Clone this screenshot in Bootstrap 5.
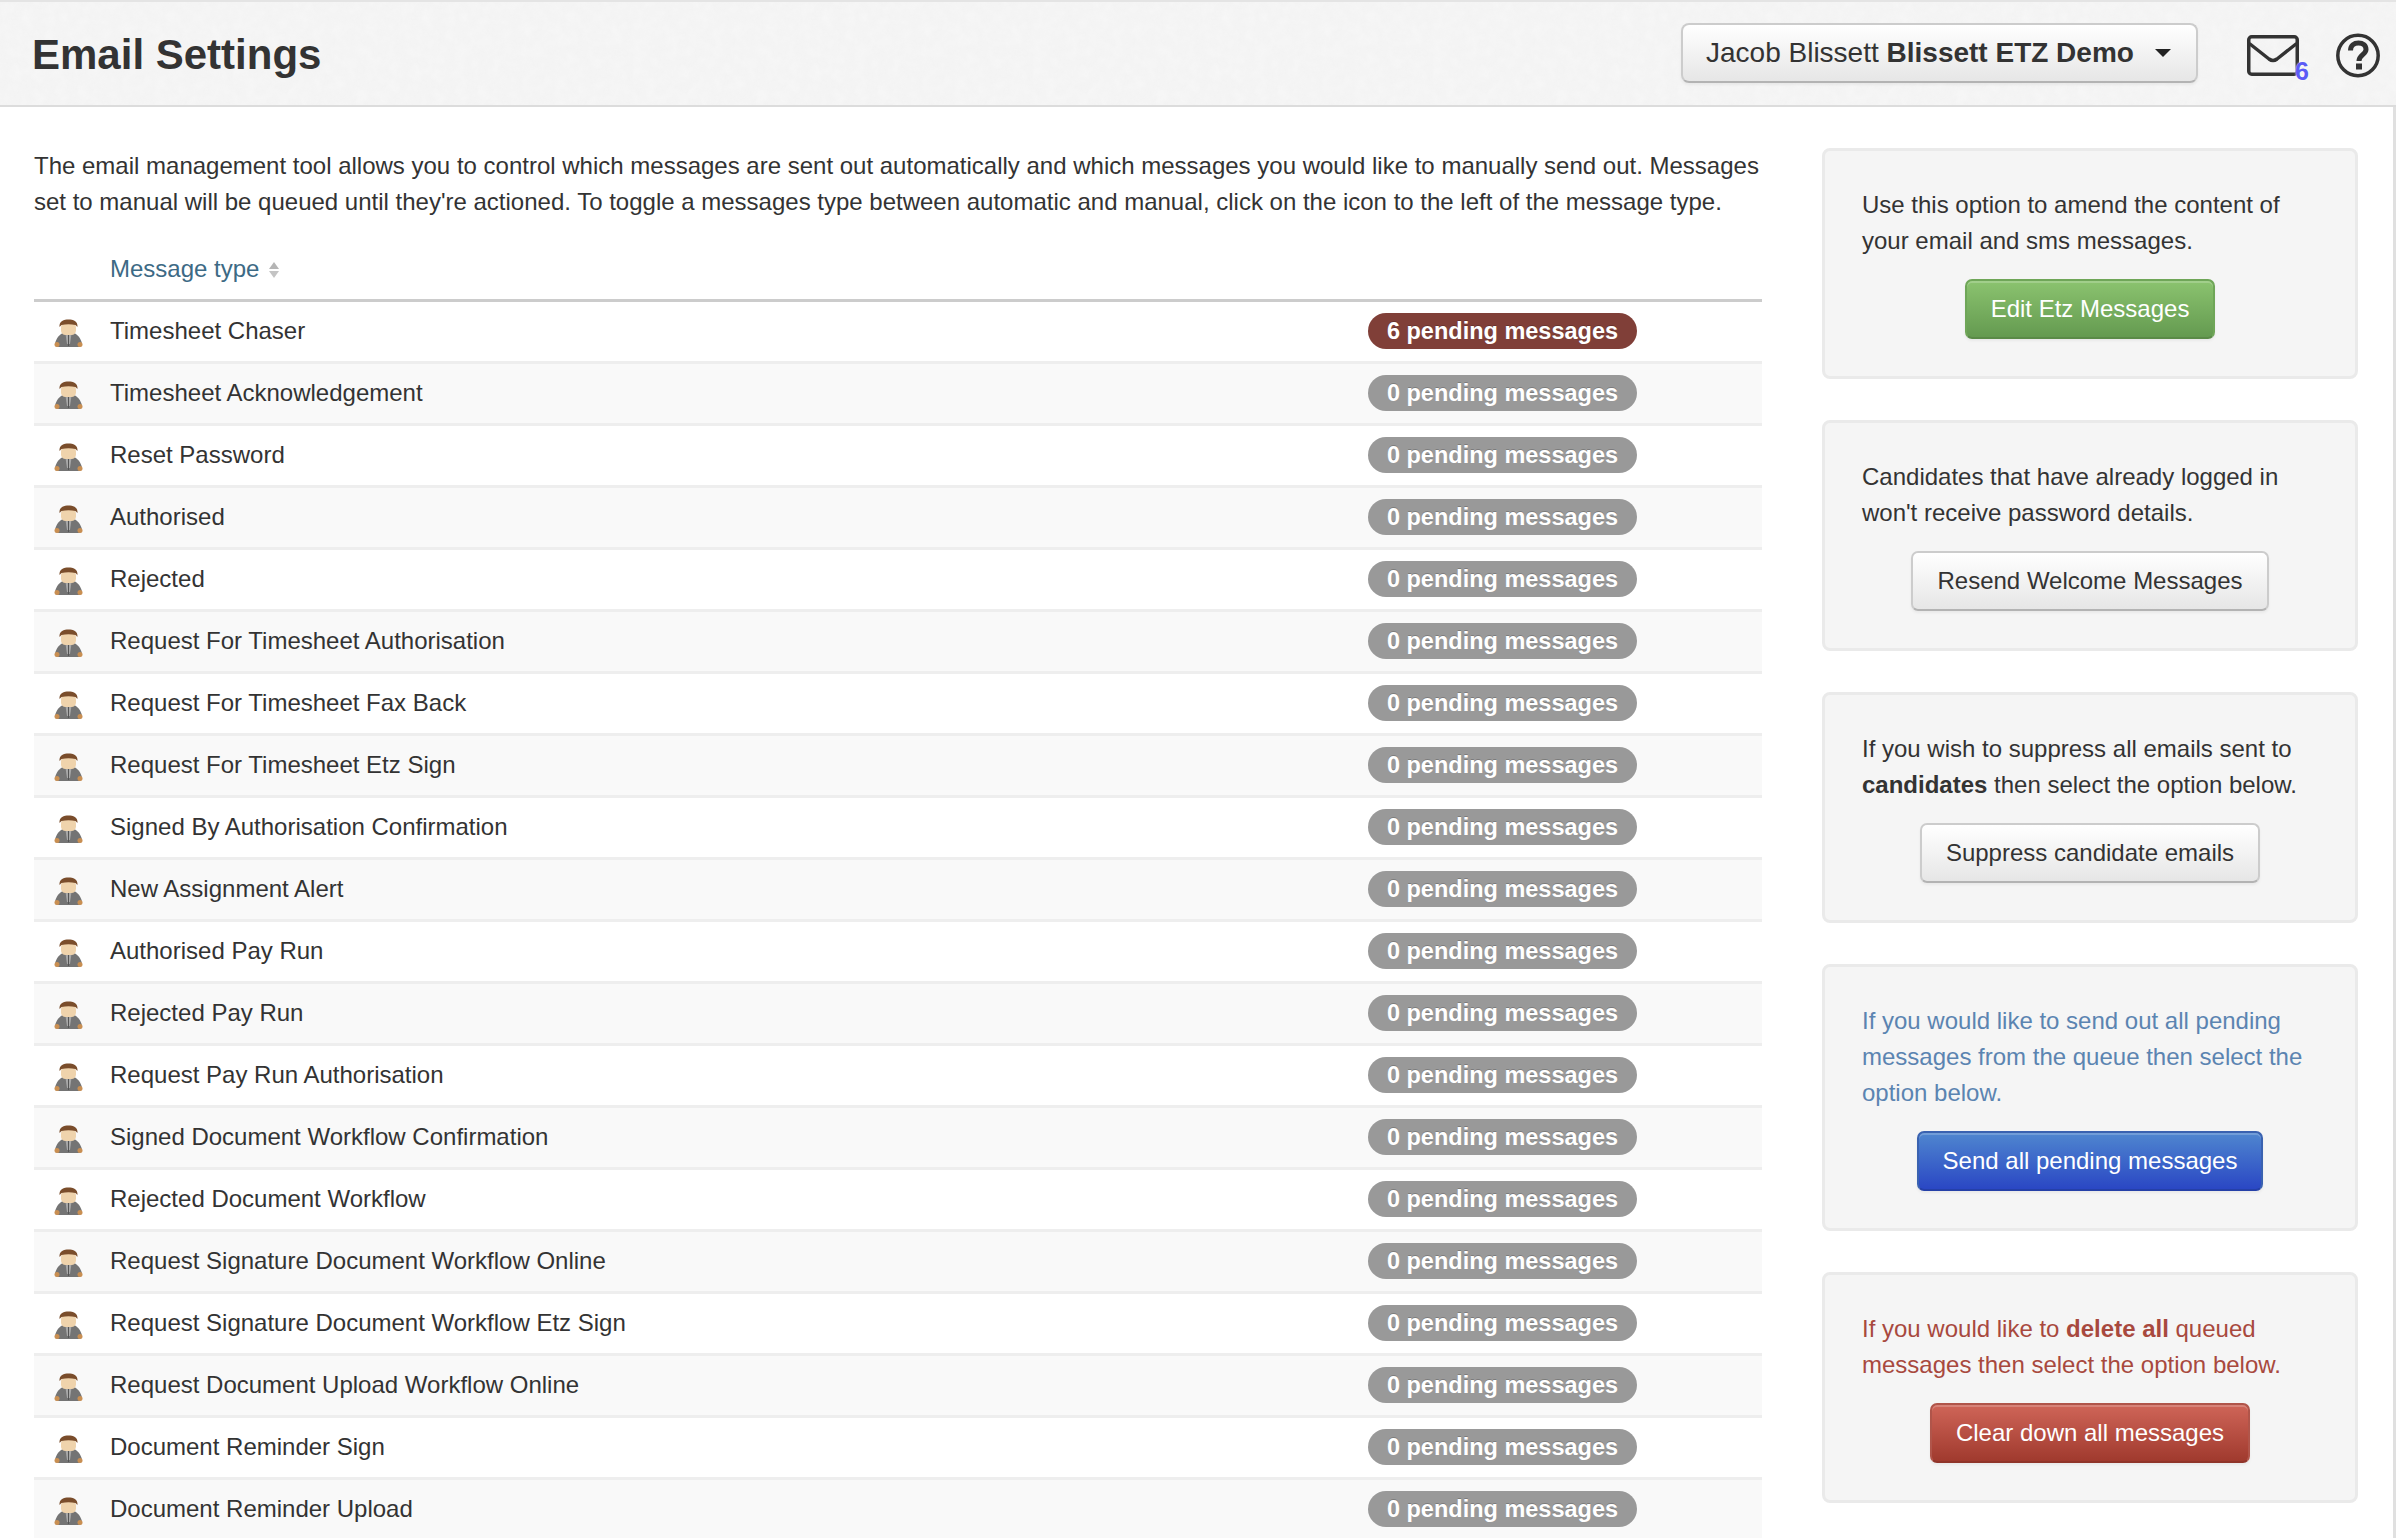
<!DOCTYPE html>
<html lang="en">
<head>
<meta charset="utf-8">
<title>Email Settings</title>
<link rel="stylesheet" href="https://cdn.jsdelivr.net/npm/bootstrap@5.3.0/dist/css/bootstrap.min.css">
<style>
html,body{height:100%;overflow:hidden}
body{font-family:"Liberation Sans",Arial,sans-serif;font-size:24px;line-height:36px;color:#333;background:#fff}
.top-strip{height:107px;background-color:#f7f7f7;background-image:url("data:image/svg+xml,%3Csvg xmlns='http://www.w3.org/2000/svg' width='400' height='200'%3E%3Cfilter id='n'%3E%3CfeTurbulence type='fractalNoise' baseFrequency='.09' numOctaves='3'/%3E%3CfeColorMatrix values='0 0 0 0 .55 0 0 0 0 .55 0 0 0 0 .55 0 0 0 .09 0'/%3E%3C/filter%3E%3Crect width='400' height='200' filter='url(%23n)'/%3E%3C/svg%3E");border-top:2px solid #e4e4e4;border-bottom:2px solid #dcdcdc;padding:0 16px 0 32px}
.page-name{font-size:42px;font-weight:700;line-height:50px;margin:2px auto 0 0;color:#333}
.acct-btn{height:60px;width:517px;font-size:28px;line-height:34px;color:#333;background:linear-gradient(#fff,#e6e6e6);border:2px solid #ccc;border-bottom-color:#b3b3b3;border-radius:8px;padding:0 25px 0 23px;margin:0 49px 2px 0;box-shadow:inset 0 2px 0 rgba(255,255,255,.2),0 2px 3px rgba(0,0,0,.05)}
.acct-caret{width:0;height:0;border-top:8px solid #222;border-left:8px solid transparent;border-right:8px solid transparent}
.mail-wrap{width:52px;height:41px;margin:4px 37px 0 0}
.mail-wrap svg{display:block}
.help-mark{display:block;margin-top:4px}
.mail-count{position:absolute;right:-10px;bottom:-8px;color:#5b5bf5;font-size:25px;line-height:25px;font-weight:700;text-shadow:0 0 2px #fff}
.main-area{padding:41px 34px 0 34px;gap:60px;height:calc(100% - 107px);border-right:3px solid #e0e0e0}
.left-col{width:1728px;flex:none}
.intro{margin:0 0 20px}
.msg-table{margin:0;--bs-table-bg:transparent;color:#333;table-layout:fixed;width:100%}
.msg-table th,.msg-table td{padding:0;border:0;vertical-align:middle;background:transparent;box-shadow:none;color:inherit}
.msg-table thead th{height:60px;font-weight:400;color:#3d6a85;border-bottom:3px solid #ccc}
.msg-table tbody td{height:62px;border-bottom:3px solid #eee}
.msg-table tbody tr:nth-child(even) td{background:#f9f9f9}
.c-icon{width:76px}
.c-pend{width:394px}
.sort-mark{display:inline-block;width:10px;height:16px;vertical-align:-1px;margin-left:10px}
.pill{display:inline-block;width:269px;height:36px;line-height:36px;border-radius:18px;background:#999;color:#fff;font-size:23.5px;font-weight:700;text-align:center;text-shadow:0 -1px 0 rgba(0,0,0,.2)}
.pill-hot{background:#803f38}
.man{display:block;margin:4px 0 0 20px;width:29px;height:29px;filter:blur(.4px)}
.right-col{width:536px;flex:none;display:flex;flex-direction:column;gap:41px}
.side-box{background:#f5f5f5;border:3px solid #eaeaea;border-radius:8px;padding:36px 37px 37px;text-align:center}
.side-box p{text-align:left;margin:0 0 20px}
.tone-blue{color:#5b84b1}
.tone-red{color:#a8493e}
.act-btn{display:inline-block;height:60px;font-size:24px;line-height:56px;padding:0 24px;border-radius:7px;border:2px solid;box-shadow:inset 0 2px 0 rgba(255,255,255,.2),0 2px 3px rgba(0,0,0,.05)}
.act-plain{color:#333;background:linear-gradient(#fff,#e6e6e6);border-color:#ccc #ccc #b3b3b3}
.act-green{color:#fff;background:linear-gradient(#8bc36f,#649a50);border-color:#6fa658 #6fa658 #5a8a47}
.act-blue{color:#fff;background:linear-gradient(#4f86cf,#2a47c4);border-color:#3a62b0 #3a62b0 #2540a8}
.act-red{color:#fff;background:linear-gradient(#cf6558,#a03a2e);border-color:#b0554a #b0554a #90352a}
</style>
</head>
<body>
<svg width="0" height="0" class="position-absolute"><symbol id="man-icon" viewBox="0 0 29 29"><path d="M1 25C2 19 6 15 10 13.500H19C23 15 27 19 28 25Q28 28 24 28H5Q1 28 1 25Z" fill="#747474"/><circle cx="3" cy="25.500" r="2.500" fill="#c98f52"/><circle cx="26" cy="25.500" r="2.500" fill="#c98f52"/><path d="M11.500 15h6l-1.500 10h-3z" fill="#a8a8a8"/><path d="M14.500 15v12" stroke="#555" stroke-width="1"/><rect x="7" y="4" width="15" height="12" rx="4.500" fill="#efd3ac"/><path d="M5.500 8C5 2 10 .5 14.500 .5S24 2 23.500 8L21.500 6Q14.500 4.500 7.500 6Z" fill="#7a4d2b"/></symbol></svg>
<header class="top-strip d-flex align-items-center">
  <h1 class="page-name">Email Settings</h1>
  <button type="button" class="btn acct-btn d-flex align-items-center justify-content-between"><span>Jacob Blissett <b>Blissett ETZ Demo</b></span><span class="acct-caret"></span></button>
  <div class="mail-wrap position-relative">
    <svg width="52" height="41" viewBox="0 0 52 41" fill="none" stroke="#333" stroke-width="3.5" stroke-linejoin="round" stroke-linecap="round"><rect x="1.750" y="1.750" width="48.500" height="37.500" rx="3"/><path d="M3 9 L22 24 Q26 27 30 24 L49 9"/></svg>
    <span class="mail-count">6</span>
  </div>
  <svg class="help-mark" width="44" height="45" viewBox="0 0 44 45" fill="none"><circle cx="22" cy="22.500" r="20.200" stroke="#333" stroke-width="3.500"/><path d="M14.500 17.500 C14.500 12.500 18 10 22.500 10 C27 10 30 12.500 30 16.500 C30 21.500 23 22 23 28" stroke="#333" stroke-width="5"/><rect x="20" y="30.500" width="6" height="6" fill="#333"/></svg>
</header>
<main class="main-area d-flex align-items-start">
  <section class="left-col">
    <p class="intro">The email management tool allows you to control which messages are sent out automatically and which messages you would like to manually send out. Messages set to manual will be queued until they're actioned. To toggle a messages type between automatic and manual, click on the icon to the left of the message type.</p>
    <table class="table msg-table">
      <thead><tr><th class="c-icon"></th><th>Message type<svg class="sort-mark" viewBox="0 0 10 16"><path d="M5 0 10 7H0z" fill="#b5b5b5"/><path d="M5 16 0 9h10z" fill="#c4c4c4"/></svg></th><th class="c-pend"></th></tr></thead>
      <tbody>
        <tr><td><svg class="man"><use href="#man-icon"/></svg></td><td>Timesheet Chaser</td><td><span class="pill pill-hot">6 pending messages</span></td></tr>
        <tr><td><svg class="man"><use href="#man-icon"/></svg></td><td>Timesheet Acknowledgement</td><td><span class="pill">0 pending messages</span></td></tr>
        <tr><td><svg class="man"><use href="#man-icon"/></svg></td><td>Reset Password</td><td><span class="pill">0 pending messages</span></td></tr>
        <tr><td><svg class="man"><use href="#man-icon"/></svg></td><td>Authorised</td><td><span class="pill">0 pending messages</span></td></tr>
        <tr><td><svg class="man"><use href="#man-icon"/></svg></td><td>Rejected</td><td><span class="pill">0 pending messages</span></td></tr>
        <tr><td><svg class="man"><use href="#man-icon"/></svg></td><td>Request For Timesheet Authorisation</td><td><span class="pill">0 pending messages</span></td></tr>
        <tr><td><svg class="man"><use href="#man-icon"/></svg></td><td>Request For Timesheet Fax Back</td><td><span class="pill">0 pending messages</span></td></tr>
        <tr><td><svg class="man"><use href="#man-icon"/></svg></td><td>Request For Timesheet Etz Sign</td><td><span class="pill">0 pending messages</span></td></tr>
        <tr><td><svg class="man"><use href="#man-icon"/></svg></td><td>Signed By Authorisation Confirmation</td><td><span class="pill">0 pending messages</span></td></tr>
        <tr><td><svg class="man"><use href="#man-icon"/></svg></td><td>New Assignment Alert</td><td><span class="pill">0 pending messages</span></td></tr>
        <tr><td><svg class="man"><use href="#man-icon"/></svg></td><td>Authorised Pay Run</td><td><span class="pill">0 pending messages</span></td></tr>
        <tr><td><svg class="man"><use href="#man-icon"/></svg></td><td>Rejected Pay Run</td><td><span class="pill">0 pending messages</span></td></tr>
        <tr><td><svg class="man"><use href="#man-icon"/></svg></td><td>Request Pay Run Authorisation</td><td><span class="pill">0 pending messages</span></td></tr>
        <tr><td><svg class="man"><use href="#man-icon"/></svg></td><td>Signed Document Workflow Confirmation</td><td><span class="pill">0 pending messages</span></td></tr>
        <tr><td><svg class="man"><use href="#man-icon"/></svg></td><td>Rejected Document Workflow</td><td><span class="pill">0 pending messages</span></td></tr>
        <tr><td><svg class="man"><use href="#man-icon"/></svg></td><td>Request Signature Document Workflow Online</td><td><span class="pill">0 pending messages</span></td></tr>
        <tr><td><svg class="man"><use href="#man-icon"/></svg></td><td>Request Signature Document Workflow Etz Sign</td><td><span class="pill">0 pending messages</span></td></tr>
        <tr><td><svg class="man"><use href="#man-icon"/></svg></td><td>Request Document Upload Workflow Online</td><td><span class="pill">0 pending messages</span></td></tr>
        <tr><td><svg class="man"><use href="#man-icon"/></svg></td><td>Document Reminder Sign</td><td><span class="pill">0 pending messages</span></td></tr>
        <tr><td><svg class="man"><use href="#man-icon"/></svg></td><td>Document Reminder Upload</td><td><span class="pill">0 pending messages</span></td></tr>
      </tbody>
    </table>
  </section>
  <aside class="right-col">
    <div class="side-box"><p>Use this option to amend the content of your email and sms messages.</p><a class="act-btn act-green text-decoration-none">Edit Etz Messages</a></div>
    <div class="side-box"><p>Candidates that have already logged in won't receive password details.</p><a class="act-btn act-plain text-decoration-none">Resend Welcome Messages</a></div>
    <div class="side-box"><p>If you wish to suppress all emails sent to <b>candidates</b> then select the option below.</p><a class="act-btn act-plain text-decoration-none">Suppress candidate emails</a></div>
    <div class="side-box"><p class="tone-blue">If you would like to send out all pending messages from the queue then select the option below.</p><a class="act-btn act-blue text-decoration-none">Send all pending messages</a></div>
    <div class="side-box"><p class="tone-red">If you would like to <b>delete all</b> queued messages then select the option below.</p><a class="act-btn act-red text-decoration-none">Clear down all messages</a></div>
  </aside>
</main>
<script src="https://cdn.jsdelivr.net/npm/bootstrap@5.3.0/dist/js/bootstrap.bundle.min.js"></script>
</body>
</html>
